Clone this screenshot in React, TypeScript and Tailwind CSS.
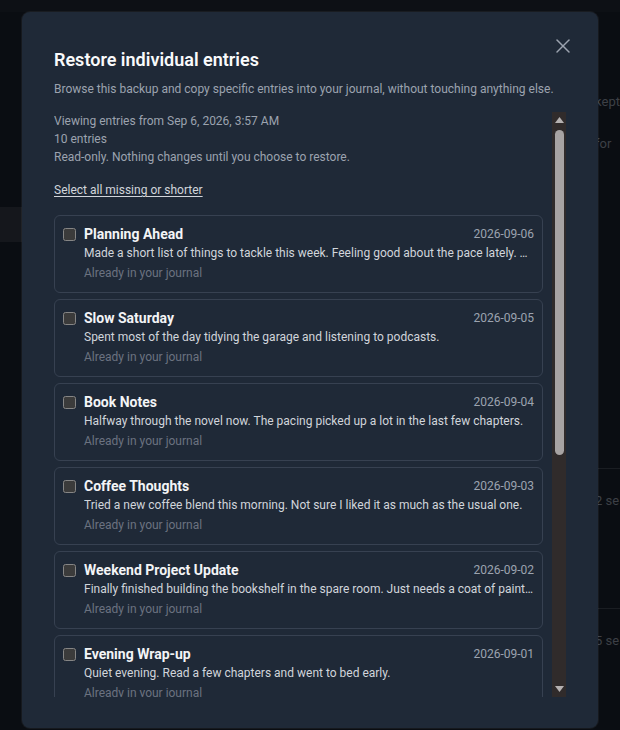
import { X } from "lucide-react";

type Entry = {
  title: string;
  date: string;
  body: string;
};

const entries: Entry[] = [
  {
    title: "Planning Ahead",
    date: "2026-09-06",
    body: "Made a short list of things to tackle this week. Feeling good about the pace lately. Want to keep it going.",
  },
  {
    title: "Slow Saturday",
    date: "2026-09-05",
    body: "Spent most of the day tidying the garage and listening to podcasts.",
  },
  {
    title: "Book Notes",
    date: "2026-09-04",
    body: "Halfway through the novel now. The pacing picked up a lot in the last few chapters.",
  },
  {
    title: "Coffee Thoughts",
    date: "2026-09-03",
    body: "Tried a new coffee blend this morning. Not sure I liked it as much as the usual one.",
  },
  {
    title: "Weekend Project Update",
    date: "2026-09-02",
    body: "Finally finished building the bookshelf in the spare room. Just needs a coat of paint and it's done.",
  },
  {
    title: "Evening Wrap-up",
    date: "2026-09-01",
    body: "Quiet evening. Read a few chapters and went to bed early.",
  },
  {
    title: "Morning Walk",
    date: "2026-08-31",
    body: "Took the long route by the river. Cool air, very few people out.",
  },
  {
    title: "Rainy Day",
    date: "2026-08-30",
    body: "Stayed in and cooked a big pot of soup for the week.",
  },
  {
    title: "Work Notes",
    date: "2026-08-29",
    body: "Wrapped up the quarterly report. Glad that one is finally done.",
  },
  {
    title: "First Entry",
    date: "2026-08-28",
    body: "Starting this journal to keep track of the small things.",
  },
];

function EntryCard({ entry }: { entry: Entry }) {
  return (
    <div className="flex gap-2 rounded-md border border-[#374151] px-2 pt-2 pb-[10px]">
      <input
        type="checkbox"
        className="mt-[4px] h-[13px] w-[13px] shrink-0 [color-scheme:dark]"
      />
      <div className="min-w-0 flex-1">
        <div className="flex items-center justify-between gap-3">
          <span className="text-sm font-bold leading-5 text-[#f3f4f6]">{entry.title}</span>
          <span className="text-xs leading-5 text-[#9ca3af]">{entry.date}</span>
        </div>
        <p className="truncate text-xs leading-[18px] text-[#d1d5db]">{entry.body}</p>
        <p className="mt-[2px] text-xs leading-[18px] text-[#6b7280]">Already in your journal</p>
      </div>
    </div>
  );
}

// drawn scrollbar, matching the classic dark one in the reference
function ScrollBar() {
  return (
    <div className="flex w-[14px] shrink-0 flex-col items-center bg-[#302b2b]">
      <svg width="9" height="6" viewBox="0 0 9 6" className="mt-[5px]">
        <path d="M4.5 0L9 6H0z" fill="#b5b1b1" />
      </svg>
      <div className="mt-[7px] h-[325px] w-[9px] rounded-full bg-[#a7a3a3]" />
      <div className="flex-1" />
      <svg width="9" height="6" viewBox="0 0 9 6" className="mb-[5px]">
        <path d="M0 0H9L4.5 6z" fill="#b5b1b1" />
      </svg>
    </div>
  );
}

export default function App() {
  return (
    <div className="relative h-[730px] overflow-hidden bg-[#0a0d12] font-['Roboto',sans-serif]">
      {/* page behind the dialog */}
      <div className="h-3 bg-[#0d1015]" />
      <div className="flex">
        <div className="w-[200px] pt-[195px]">
          <div className="h-[35px] bg-[#15171c]" />
        </div>
        <div className="flex-1 pl-[401px] pt-[80px] text-[13px] text-[#3d4046]">
          <div>kept</div>
          <div className="mt-[22px]">for</div>
          <div className="mt-[315px] border-t border-[#1a1d22] pt-[22px]">2 se</div>
          <div className="mt-[97px] border-t border-[#1a1d22] pt-[22px]">5 se</div>
        </div>
      </div>

      {/* dialog */}
      <div className="absolute inset-0 flex justify-center pt-3">
        <div className="relative flex h-[716px] w-[576px] flex-col rounded-lg bg-[#1f2937] px-8 pt-[34px] pb-[31px] ring-1 ring-white/5">
          <button className="absolute right-[23px] top-[22px] text-[#9ca3af]">
            <X className="h-6 w-6" strokeWidth={1.5} />
          </button>
          <h2 className="text-lg font-semibold leading-7 text-[#f9fafb]">Restore individual entries</h2>
          <p className="mt-[7px] text-xs leading-4 text-[#9ca3af]">
            Browse this backup and copy specific entries into your journal, without touching anything else.
          </p>

          <div className="mt-[15px] flex min-h-0 flex-1 gap-[9px]">
            <div className="min-w-0 flex-1 overflow-y-auto [scrollbar-width:none]">
              <div className="text-xs leading-[18px] text-[#9ca3af]">
                <p>Viewing entries from Sep 6, 2026, 3:57 AM</p>
                <p>10 entries</p>
                <p>Read-only. Nothing changes until you choose to restore.</p>
              </div>
              <button className="mt-[15px] text-xs leading-[18px] text-[#d1d5db] underline underline-offset-2">
                Select all missing or shorter
              </button>
              <div className="mt-[14px] flex flex-col gap-1.5 pb-2">
                {entries.map((entry) => (
                  <EntryCard key={entry.date} entry={entry} />
                ))}
              </div>
            </div>
            <ScrollBar />
          </div>
        </div>
      </div>
    </div>
  );
}
